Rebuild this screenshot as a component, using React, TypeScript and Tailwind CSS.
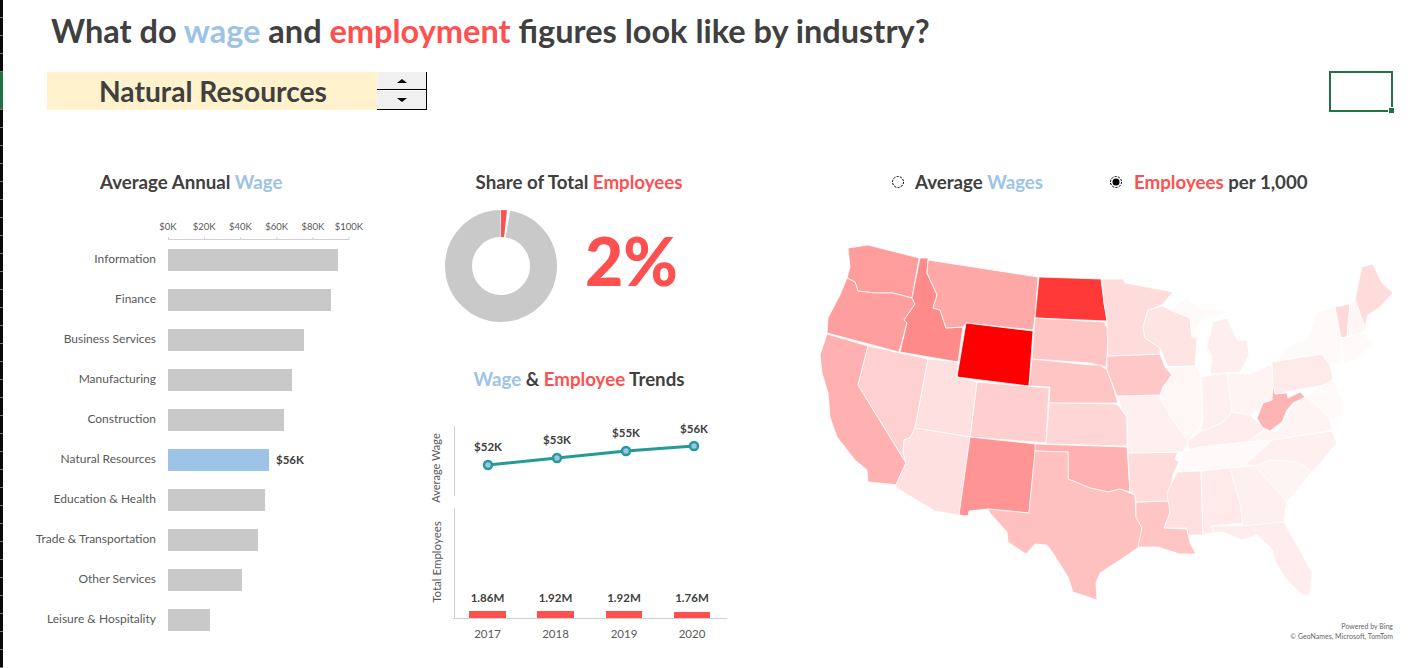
// Excel-style dashboard: wage and employment figures by industry

const LEFT_BARS = [
  { label: 'Information', width: 170 },
  { label: 'Finance', width: 163 },
  { label: 'Business Services', width: 136 },
  { label: 'Manufacturing', width: 124 },
  { label: 'Construction', width: 116 },
  { label: 'Natural Resources', width: 101, value: '$56K' },
  { label: 'Education & Health', width: 97 },
  { label: 'Trade & Transportation', width: 90 },
  { label: 'Other Services', width: 74 },
  { label: 'Leisure & Hospitality', width: 42 },
]

const GUTTER_ROWS = [18, 18, 18, 18, 38, 18, 18, 18, 18, 18, 18, 18, 18, 18, 18, 18, 18, 18, 18, 18, 18, 18, 18, 18, 18, 18, 18, 18, 18, 18, 18, 18, 18, 18, 18, 18]

// State shapes, in page pixels
const STATES: { fill: string; pts: string }[] = [
  { fill: '#ff9c9c', pts: '848,248 868,245 919,258 912,298 893,293 875,293 858,291 855,282 847,278 850,267' },
  { fill: '#ff9e9e', pts: '847,278 855,282 858,291 875,293 893,293 912,298 915,304 904,320 907,323 899,352 827,333 828,318 840,295' },
  { fill: '#ffb0b0', pts: '827,334 868,346 858,385 906,463 898,480 900,485 868,482 867,470 855,460 837,437 830,417 828,393 822,373 820,355' },
  { fill: '#ffd0d0', pts: '868,346 928,359 915,428 910,438 904,440 903,452 906,463 858,385' },
  { fill: '#ff8a8a', pts: '920,258 928,258 927,273 937,295 933,308 940,310 946,328 963,327 958,362 900,352 907,323 904,320 915,304 912,298' },
  { fill: '#ffa8a8', pts: '928,260 1038,277 1035,318 1033,330 966,323 963,327 946,328 940,310 933,308 937,295 927,273' },
  { fill: '#ff0000', pts: '966,323 1033,331 1029,386 957,377' },
  { fill: '#ff3838', pts: '1039,277 1101,279 1104,303 1107,321 1035,318' },
  { fill: '#ffc4c4', pts: '1035,318 1104,322 1108,330 1107,357 1106,367 1090,363 1032,359' },
  { fill: '#ffc4c4', pts: '1032,359 1090,365 1100,365 1107,370 1112,383 1118,403 1049,403 1050,387 1029,386' },
  { fill: '#ffcfcf', pts: '977,382 1049,388 1046,443 970,437' },
  { fill: '#ffe0e0', pts: '928,359 958,362 957,377 977,382 970,437 915,428' },
  { fill: '#ffe0e0', pts: '915,428 970,437 959,515 935,511 895,487 898,480 906,463 903,452 904,440 910,438' },
  { fill: '#ff9494', pts: '970,437 1036,444 1029,513 988,509 969,511 968,516 959,515' },
  { fill: '#ffd6d6', pts: '1049,403 1117,404 1127,417 1127,446 1046,444' },
  { fill: '#ffb0b0', pts: '1035,444 1127,447 1130,492 1120,489 1108,492 1090,488 1068,479 1068,452 1035,451' },
  { fill: '#ffc0c0', pts: '1035,451 1068,452 1068,479 1090,488 1108,492 1120,489 1135,495 1136,517 1142,528 1139,547 1120,560 1100,573 1096,583 1097,600 1073,592 1068,577 1053,553 1047,545 1035,544 1026,554 1008,542 1007,532 990,513 988,509 1029,513' },
  { fill: '#ffc4c4', pts: '1136,502 1168,501 1171,510 1164,528 1187,529 1190,543 1196,554 1180,554 1158,547 1138,547 1142,528 1136,517' },
  { fill: '#ffdcdc', pts: '1128,453 1178,452 1175,459 1179,462 1173,475 1168,501 1136,502 1135,495 1130,492' },
  { fill: '#fff0f0', pts: '1117,396 1160,395 1173,420 1185,437 1188,442 1183,452 1128,453 1127,417 1122,410' },
  { fill: '#ffc8c8', pts: '1107,356 1160,354 1165,367 1172,375 1163,387 1160,395 1117,396 1112,383 1107,370' },
  { fill: '#ffdcdc', pts: '1102,279 1123,279 1125,283 1147,287 1173,292 1162,305 1148,310 1143,327 1145,338 1160,348 1160,354 1108,356 1107,320 1104,303' },
  { fill: '#ffe4e4', pts: '1148,310 1162,306 1190,318 1192,338 1197,337 1195,366 1168,367 1160,348 1145,338 1143,327' },
  { fill: '#fff6f6', pts: '1168,367 1197,366 1202,380 1203,420 1197,430 1188,442 1173,420 1160,398 1163,387 1172,375' },
  { fill: '#fff0f0', pts: '1201,377 1227,373 1232,412 1222,423 1200,432 1203,420' },
  { fill: '#ffeeee', pts: '1213,322 1227,318 1237,340 1247,340 1249,355 1240,372 1210,374 1212,357 1207,347' },
  { fill: '#fffafa', pts: '1170,310 1187,297 1197,308 1230,312 1217,316 1203,318 1192,336 1190,318' },
  { fill: '#fff4f4', pts: '1227,373 1250,374 1272,364 1273,383 1272,400 1260,410 1250,415 1232,412' },
  { fill: '#ffecec', pts: '1200,432 1222,423 1232,412 1250,415 1257,422 1265,428 1248,442 1200,447 1190,450 1187,442' },
  { fill: '#fff9f9', pts: '1200,447 1248,442 1272,440 1258,453 1245,465 1230,468 1178,472 1183,452' },
  { fill: '#ffe0e0', pts: '1177,472 1201,471 1203,535 1188,535 1187,528 1164,528 1170,513 1167,493' },
  { fill: '#ffe9e9', pts: '1201,471 1230,468 1240,503 1243,523 1212,526 1213,533 1203,535' },
  { fill: '#fff0f0', pts: '1230,468 1255,466 1287,500 1284,522 1243,526 1240,503' },
  { fill: '#fff4f4', pts: '1255,466 1270,460 1298,462 1312,472 1303,483 1287,502' },
  { fill: '#fff0f0', pts: '1245,465 1258,453 1272,440 1332,431 1337,443 1323,460 1312,472 1298,462 1270,460 1255,466' },
  { fill: '#fff4f4', pts: '1248,442 1265,430 1277,432 1290,410 1300,395 1307,397 1330,417 1332,430 1272,440' },
  { fill: '#ffb4b4', pts: '1273,383 1275,394 1287,393 1288,398 1300,392 1305,397 1293,403 1287,410 1282,422 1270,431 1262,427 1257,418 1263,403 1272,400' },
  { fill: '#ffeaea', pts: '1272,362 1322,354 1330,365 1333,380 1323,385 1275,394 1273,383' },
  { fill: '#fffafa', pts: '1278,360 1287,347 1307,337 1317,312 1335,307 1340,337 1343,360 1330,365 1322,354' },
  { fill: '#ffd8d8', pts: '1335,307 1350,304 1347,337 1341,338' },
  { fill: '#fff6f6', pts: '1350,304 1355,299 1365,327 1363,333 1347,337' },
  { fill: '#ffdcdc', pts: '1355,299 1362,267 1373,264 1382,283 1393,293 1380,307 1368,315 1365,327' },
  { fill: '#fffafa', pts: '1341,338 1363,333 1375,345 1345,365 1343,360' },
  { fill: '#fffafa', pts: '1323,385 1333,380 1340,395 1345,415 1332,420 1307,397' },
  { fill: '#ffecec', pts: '1212,526 1243,526 1284,522 1290,533 1300,550 1312,573 1310,595 1302,595 1287,580 1275,562 1273,550 1257,535 1242,540 1223,532 1213,533' },
]

const WAGE_POINTS = [
  { x: 68, y: 55, label: '$52K', ly: 33 },
  { x: 137, y: 48, label: '$53K', ly: 26 },
  { x: 206, y: 41, label: '$55K', ly: 19 },
  { x: 274, y: 36, label: '$56K', ly: 15 },
]

const EMP_BARS = [
  { x: 49, w: 37, h: 7, label: '1.86M', year: '2017' },
  { x: 117, w: 37, h: 7, label: '1.92M', year: '2018' },
  { x: 186, w: 36, h: 7, label: '1.92M', year: '2019' },
  { x: 254, w: 36, h: 6, label: '1.76M', year: '2020' },
]

function Wage({ children }: { children: React.ReactNode }) {
  return <span className="text-[#9dc3e6]">{children}</span>
}

function Red({ children }: { children: React.ReactNode }) {
  return <span className="text-[#ff5050]">{children}</span>
}

function Radio({ on }: { on?: boolean }) {
  return (
    <svg width="14" height="14" viewBox="0 0 14 14" className="shrink-0">
      <circle cx="7" cy="7" r="5.5" fill="white" stroke="#000" strokeWidth="1" strokeDasharray="2.2 1.2" />
      {on && <circle cx="7" cy="7" r="3.5" fill="#000" />}
    </svg>
  )
}

function WageBars() {
  return (
    <div className="w-[416px] shrink-0">
      <h2 className="h-[24px] pl-[96px] text-[18.7px] leading-[24px] font-bold">
        Average Annual <Wage>Wage</Wage>
      </h2>
      <svg width="230" height="32" viewBox="0 0 230 32" className="ml-[146px] mt-[16px] block">
        {['$0K', '$20K', '$40K', '$60K', '$80K', '$100K'].map((t, i) => (
          <text key={t} x={18 + i * 36.2} y="20" textAnchor="middle" fontSize="9.5" fill="#595959">{t}</text>
        ))}
        <line x1="18" y1="29.5" x2="199" y2="29.5" stroke="#d0d0d0" />
        {[0, 1, 2, 3, 4, 5].map((i) => (
          <line key={i} x1={18.5 + i * 36.1} y1="27" x2={18.5 + i * 36.1} y2="30" stroke="#d0d0d0" />
        ))}
      </svg>
      <div className="mt-[7px] flex flex-col gap-[18px]">
        {LEFT_BARS.map((b) => (
          <div key={b.label} className="flex h-[22px] items-center">
            <div className="w-[152px] shrink-0 pb-[2px] text-right text-[12px] text-[#595959]">{b.label}</div>
            <div
              className={b.value ? 'ml-[12px] h-full bg-[#9dc3e6]' : 'ml-[12px] h-full bg-[#c9c9c9]'}
              style={{ width: b.width }}
            />
            {b.value && <span className="ml-[7px] text-[11.5px] font-bold text-[#404040]">{b.value}</span>}
          </div>
        ))}
      </div>
    </div>
  )
}

function ShareAndTrends() {
  return (
    <div className="w-[370px] shrink-0">
      <h2 className="h-[24px] w-[318px] text-center text-[18.7px] leading-[24px] font-bold">
        Share of Total <Red>Employees</Red>
      </h2>
      <div className="mt-[16px] flex h-[112px] items-center pl-[25px]">
        <svg width="112" height="112" viewBox="0 0 112 112">
          <g transform="rotate(-90 56 56)">
            <circle cx="56" cy="56" r="42.5" fill="none" stroke="#c9c9c9" strokeWidth="27" strokeDasharray="259 8" strokeDashoffset="-7" />
            <circle cx="56" cy="56" r="42.5" fill="none" stroke="#ff5050" strokeWidth="27" strokeDasharray="4.6 263" />
          </g>
        </svg>
        <div className="mb-[10px] ml-[28px] text-[66px] leading-none font-black text-[#ff5050]">2%</div>
      </div>
      <h2 className="mt-[45px] h-[24px] w-[318px] text-center text-[18.7px] leading-[24px] font-bold">
        <Wage>Wage</Wage> &amp; <Red>Employee</Red> Trends
      </h2>
      <svg width="320" height="260" viewBox="0 0 320 260" className="mt-[19px] block">
        <g transform="translate(0 -10)">
          <line x1="34.5" y1="26" x2="34.5" y2="96" stroke="#d0d0d0" />
          <text transform="translate(20 68) rotate(-90)" textAnchor="middle" fontSize="11" fill="#595959">Average Wage</text>
          <polyline points={WAGE_POINTS.map((p) => `${p.x},${p.y + 10}`).join(' ')} fill="none" stroke="#259a96" strokeWidth="3" />
          {WAGE_POINTS.map((p) => (
            <g key={p.label}>
              <circle cx={p.x} cy={p.y + 10} r="4" fill="#9dc3e6" stroke="#259a96" strokeWidth="2.5" />
              <text x={p.x} y={p.ly + 18} textAnchor="middle" fontSize="11.5" fontWeight="700" fill="#404040">{p.label}</text>
            </g>
          ))}
          <line x1="34.5" y1="108" x2="34.5" y2="218" stroke="#d0d0d0" />
          <line x1="33" y1="218.5" x2="307" y2="218.5" stroke="#d0d0d0" />
          <text transform="translate(21 162) rotate(-90)" textAnchor="middle" fontSize="11.5" fill="#595959">Total Employees</text>
          {EMP_BARS.map((b) => (
            <g key={b.year}>
              <rect x={b.x} y={218 - b.h} width={b.w} height={b.h} fill="#ff5050" />
              <text x={b.x + b.w / 2} y="202" textAnchor="middle" fontSize="11.5" fontWeight="700" fill="#404040">{b.label}</text>
              <text x={b.x + b.w / 2} y="238" textAnchor="middle" fontSize="11.5" fill="#595959">{b.year}</text>
            </g>
          ))}
        </g>
      </svg>
    </div>
  )
}

function MapPanel() {
  return (
    <div className="min-w-0 flex-1">
      <div className="flex h-[24px] items-center text-[18.7px] font-bold">
        <div className="ml-[101px] flex items-center gap-[10px]">
          <Radio />
          <span>Average <Wage>Wages</Wage></span>
        </div>
        <div className="ml-[66px] flex items-center gap-[11px]">
          <Radio on />
          <span><Red>Employees</Red> per 1,000</span>
        </div>
      </div>
      <svg width="600" height="380" viewBox="800 230 600 380" className="ml-[10px] mt-[36px] block">
        {STATES.map((s) => (
          <polygon key={s.pts} points={s.pts} fill={s.fill} stroke="#fff" strokeWidth="0.8" strokeLinejoin="round" />
        ))}
      </svg>
      <div className="mr-[18px] mt-[11px] text-right text-[7px] leading-[10px] text-[#666666]">
        <div>Powered by Bing</div>
        <div>© GeoNames, Microsoft, TomTom</div>
      </div>
    </div>
  )
}

export default function App() {
  return (
    <div className="flex h-[668px] w-[1411px] overflow-hidden bg-white font-['Lato',sans-serif] text-[#404040]">
      <div className="flex w-[3px] shrink-0 flex-col">
        {GUTTER_ROWS.map((h, i) => (
          <div
            key={i}
            className={h === 38 ? 'shrink-0 border-b border-[#777] bg-[#217346]' : 'shrink-0 border-b border-[#777] bg-[#0a0a0a]'}
            style={{ height: h }}
          />
        ))}
      </div>
      <div className="ml-[1px] min-w-0 flex-1">
        <h1 className="h-[62px] pl-[47px] text-[32.5px] leading-[62px] font-bold whitespace-nowrap">
          What do <Wage>wage</Wage> and <Red>employment</Red> figures look like by industry?
        </h1>
        <div className="mt-[10px] flex h-[38px] items-stretch pl-[43px]">
          <div className="flex w-[330px] items-center bg-[#fff2cc] pl-[52px] text-[28.2px] font-bold">Natural Resources</div>
          <div className="flex w-[50px] flex-col border-r border-b border-black bg-[#f0f0f0]">
            <div className="flex h-[18px] items-center justify-center border-b border-black">
              <span className="h-0 w-0 border-x-[5px] border-b-[4px] border-x-transparent border-b-black" />
            </div>
            <div className="flex flex-1 items-center justify-center border-t border-white">
              <span className="h-0 w-0 border-x-[5px] border-t-[4px] border-x-transparent border-t-black" />
            </div>
          </div>
          <div className="relative ml-[902px] mt-[-1px] h-[41px] w-[64px] border-2 border-[#217346]">
            <span className="absolute right-[-3px] bottom-[-3px] h-[6px] w-[6px] border-t border-l border-white bg-[#217346]" />
          </div>
        </div>
        <div className="mt-[60px] flex">
          <WageBars />
          <ShareAndTrends />
          <MapPanel />
        </div>
      </div>
    </div>
  )
}
